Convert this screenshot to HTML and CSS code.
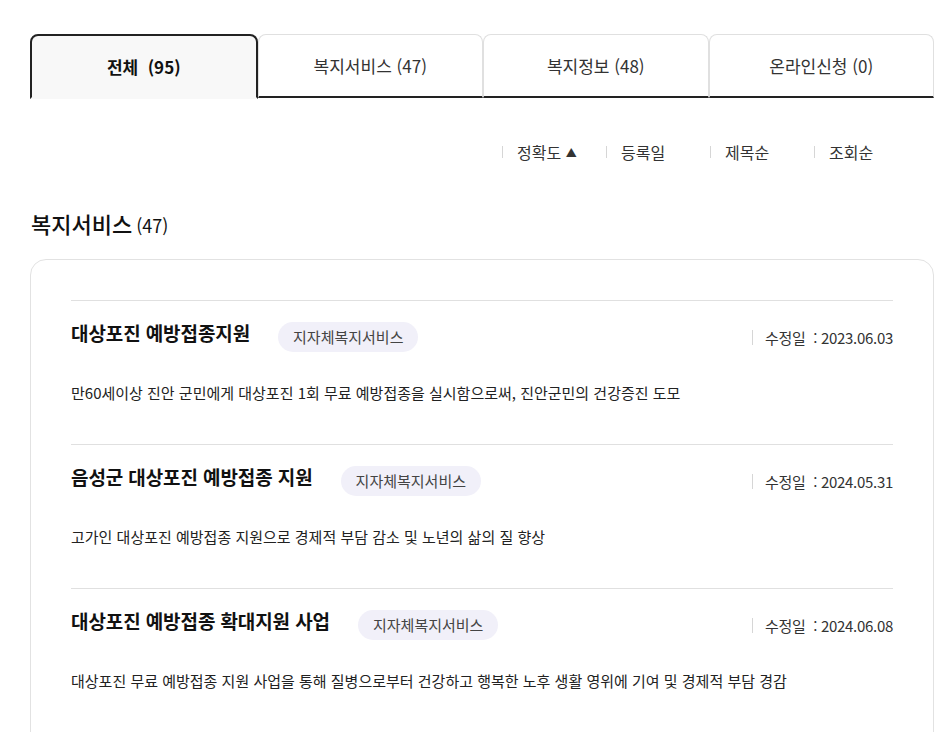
FILE: index.html
```html
<!DOCTYPE html>
<html lang="ko">
<head>
  <meta charset="UTF-8">
  <meta name="viewport" content="width=device-width, initial-scale=1.0">
  <title>복지서비스 검색결과</title>
  <link rel="stylesheet" href="styles.css">
</head>
<body>
  <div class="wrap">
    <ul class="tabs">
      <li class="tab active">전체&nbsp;&nbsp;(95)</li>
      <li class="tab">복지서비스 (47)</li>
      <li class="tab">복지정보 (48)</li>
      <li class="tab">온라인신청 (0)</li>
    </ul>

    <ul class="sort">
      <li class="sort-item">정확도 <span class="arrow">&#9650;</span></li>
      <li class="sort-item">등록일</li>
      <li class="sort-item">제목순</li>
      <li class="sort-item">조회순</li>
    </ul>

    <h2 class="section-title">복지서비스<span class="count">(47)</span></h2>

    <div class="result-box">
      <div class="item">
        <div class="item-head">
          <h3 class="item-title">대상포진 예방접종지원</h3>
          <span class="tag">지자체복지서비스</span>
          <span class="date">수정일 &nbsp;:&nbsp;2023.06.03</span>
        </div>
        <p class="desc">만60세이상 진안 군민에게 대상포진 1회 무료 예방접종을 실시함으로써, 진안군민의 건강증진 도모</p>
      </div>
      <div class="item">
        <div class="item-head">
          <h3 class="item-title">음성군 대상포진 예방접종 지원</h3>
          <span class="tag">지자체복지서비스</span>
          <span class="date">수정일 &nbsp;:&nbsp;2024.05.31</span>
        </div>
        <p class="desc">고가인 대상포진 예방접종 지원으로 경제적 부담 감소 및 노년의 삶의 질 향상</p>
      </div>
      <div class="item">
        <div class="item-head">
          <h3 class="item-title">대상포진 예방접종 확대지원 사업</h3>
          <span class="tag">지자체복지서비스</span>
          <span class="date">수정일 &nbsp;:&nbsp;2024.06.08</span>
        </div>
        <p class="desc">대상포진 무료 예방접종 지원 사업을 통해 질병으로부터 건강하고 행복한 노후 생활 영위에 기여 및 경제적 부담 경감</p>
      </div>
    </div>
  </div>
</body>
</html>
```

FILE: styles.css
```css
body {
  margin: 0;
  font-family: "Noto Sans CJK KR", "Noto Sans", sans-serif;
  color: #222;
  background: #fff;
}

.wrap {
  padding: 34px 14px 0 30px;
}

ul {
  list-style: none;
  margin: 0;
  padding: 0;
}

/* tabs */
.tabs {
  display: flex;
}

.tab {
  flex: 1;
  height: 61px;
  display: flex;
  align-items: center;
  justify-content: center;
  border: 1px solid #e0e0e0;
  border-bottom: 2px solid #222;
  border-radius: 8px 8px 0 0;
  font-size: 17px;
  color: #333;
}

.tab.active {
  border: 2px solid #222;
  border-bottom: 2px solid transparent;
  height: 61px;
  background: #f8f8f8;
  font-weight: 700;
  color: #111;
}

/* sort */
.sort {
  display: flex;
  justify-content: flex-end;
  margin-top: 41px;
  padding-right: 16px;
}

.sort-item {
  width: 89px;
  padding-left: 15px;
  font-size: 16px;
  color: #333;
  line-height: 24px;
  position: relative;
}

.sort-item::before {
  content: "";
  position: absolute;
  left: 0;
  top: 6px;
  width: 1px;
  height: 12px;
  background: #d6d6d6;
}

.arrow {
  font-size: 11px;
  vertical-align: 2px;
}

/* section */
.section-title {
  margin: 44px 0 0 1px;
  font-size: 22px;
  font-weight: 500;
  color: #111;
  line-height: 30px;
}

.count {
  font-size: 18px;
  font-weight: 400;
  margin-left: 4px;
}

.result-box {
  margin-top: 19px;
  border: 1px solid #e2e2e2;
  border-radius: 16px;
  padding: 40px 40px 40px;
}

.item {
  border-top: 1px solid #e0e0e0;
  padding: 21px 0 39px;
}

.item-head {
  display: flex;
  align-items: flex-start;
  height: 30px;
}

.item-title {
  margin: 0;
  font-size: 19px;
  font-weight: 700;
  line-height: 22px;
  color: #111;
  letter-spacing: -0.1px;
}

.tag {
  margin-left: 28px;
  height: 30px;
  line-height: 30px;
  padding: 0 15px;
  border-radius: 15px;
  background: #f1f0f9;
  font-size: 15px;
  color: #444;
}

.date {
  margin-left: auto;
  margin-top: 8px;
  padding-left: 12px;
  border-left: 1px solid #d6d6d6;
  font-size: 15px;
  line-height: 15px;
  color: #333;
  letter-spacing: -0.3px;
}

.desc {
  margin: 29px 0 0;
  font-size: 15px;
  line-height: 24px;
  color: #222;
}
```
